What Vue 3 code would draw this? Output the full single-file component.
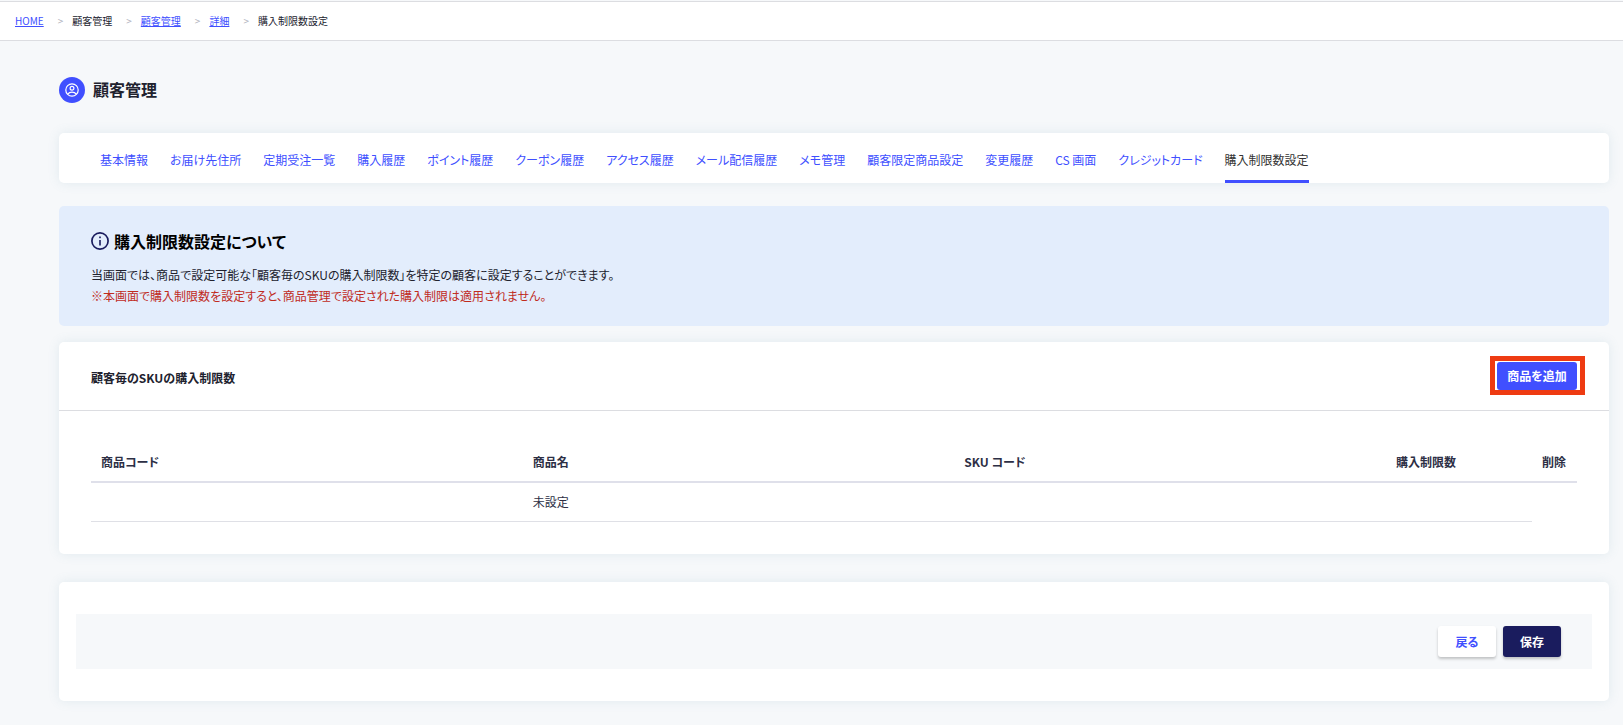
<script setup>
const crumbs = [
  { label: 'HOME', link: true },
  { label: '顧客管理', link: false },
  { label: '顧客管理', link: true },
  { label: '詳細', link: true },
  { label: '購入制限数設定', link: false }
]

const tabs = [
  '基本情報', 'お届け先住所', '定期受注一覧', '購入履歴', 'ポイント履歴', 'クーポン履歴',
  'アクセス履歴', 'メール配信履歴', 'メモ管理', '顧客限定商品設定', '変更履歴',
  'CS 画面', 'クレジットカード', '購入制限数設定'
]
const current = '購入制限数設定'
</script>

<template>
  <div class="page">
    <nav class="breadcrumb" aria-label="breadcrumb">
      <ol>
        <li v-for="(c, i) in crumbs" :key="i">
          <a v-if="c.link" href="#">{{ c.label }}</a>
          <span v-else>{{ c.label }}</span>
        </li>
      </ol>
    </nav>

    <main class="content">
      <header class="title">
        <span class="title-icon">
          <svg viewBox="0 0 14 14" width="14" height="14" aria-hidden="true">
            <g fill="none" stroke="#fff" stroke-width="1.2">
              <circle cx="7" cy="7" r="6.2" />
              <circle cx="7" cy="5.200" r="1.900" />
              <path d="M2.700 11.200c1-1.300 2.500-2 4.300-2s3.300.700 4.300 2" />
            </g>
          </svg>
        </span>
        <h1>顧客管理</h1>
      </header>

      <nav class="card tabs" aria-label="tabs">
        <a v-for="t in tabs" :key="t" href="#" :class="{ active: t === current }">{{ t }}</a>
      </nav>

      <section class="info">
        <h2>
          <svg viewBox="0 0 18 18" width="18" height="18" aria-hidden="true">
            <circle cx="9" cy="9" r="8.100" fill="none" stroke="#1a1c5e" stroke-width="1.700" />
            <rect x="8.200" y="4.500" width="1.600" height="1.700" fill="#1a1c5e" />
            <rect x="8.200" y="8" width="1.600" height="5.500" fill="#1a1c5e" />
          </svg>
          購入制限数設定について
        </h2>
        <p>当画面では、商品で設定可能な「顧客毎のSKUの購入制限数」を特定の顧客に設定することができます。</p>
        <p class="warn">※本画面で購入制限数を設定すると、商品管理で設定された購入制限は適用されません。</p>
      </section>

      <section class="card limits">
        <header class="limits-head">
          <h2>顧客毎のSKUの購入制限数</h2>
          <span class="highlight">
            <button type="button" class="add">商品を追加</button>
          </span>
        </header>
        <div class="limits-body">
          <table>
            <colgroup>
              <col />
              <col />
              <col />
              <col class="col-limit" />
              <col class="col-delete" />
            </colgroup>
            <thead>
              <tr>
                <th scope="col">商品コード</th>
                <th scope="col">商品名</th>
                <th scope="col">SKU コード</th>
                <th scope="col">購入制限数</th>
                <th scope="col">削除</th>
              </tr>
            </thead>
            <tbody>
              <tr>
                <td></td>
                <td>未設定</td>
                <td></td>
                <td></td>
              </tr>
            </tbody>
          </table>
        </div>
      </section>

      <section class="card footer">
        <div class="actions">
          <button type="button" class="back">戻る</button>
          <button type="button" class="save">保存</button>
        </div>
      </section>
    </main>
  </div>
</template>

<style>
body {
  background: #f6f8fa;
}
</style>

<style scoped>
.page {
  font-family: "Noto Sans CJK JP", "Noto Sans", sans-serif;
  font-feature-settings: "palt";
  font-size: 12px;
  line-height: 20px;
  color: #21222e;
}

h1,
h2,
p,
ol {
  margin: 0;
  padding: 0;
}

a {
  color: #404fff;
}

button {
  border: 0;
  border-radius: 3px;
  padding: 0;
  font: inherit;
  font-feature-settings: inherit;
  font-weight: 700;
  cursor: pointer;
}

.breadcrumb {
  margin-top: 1px;
  border-top: 1px solid #dcdde1;
  border-bottom: 1px solid #dcdde1;
  background: #fff;
  padding: 9px 15px;
}

.breadcrumb ol {
  display: flex;
  gap: 14px;
  list-style: none;
  font-size: 10px;
}

.breadcrumb li + li::before {
  content: ">";
  margin-right: 9px;
  color: #b0b2bd;
}

.content {
  padding: 36px 14px 22px 59px;
}

.title {
  display: flex;
  align-items: center;
  gap: 8px;
}

.title-icon {
  display: flex;
  align-items: center;
  justify-content: center;
  width: 26px;
  height: 26px;
  border-radius: 50%;
  background: #404fff;
}

.title h1 {
  padding-bottom: 2px;
  font-size: 16px;
  line-height: 24px;
}

.card {
  border-radius: 5px;
  background: #fff;
  box-shadow: 0 0 12px rgba(100, 150, 170, 0.14);
}

.tabs {
  display: flex;
  gap: 22px;
  margin-top: 30px;
  padding: 0 41px;
}

.tabs a {
  padding: 17px 0 10px;
  border-bottom: 3px solid transparent;
  text-decoration: none;
  white-space: nowrap;
}

.tabs a.active {
  border-bottom-color: #404fff;
  color: #333;
}

.info {
  margin-top: 23px;
  padding: 23px 32px 20px;
  border-radius: 5px;
  background: #e3edfc;
}

.info h2 {
  display: flex;
  align-items: center;
  gap: 5px;
  margin-bottom: 11px;
  font-size: 16px;
  line-height: 24px;
  color: #000;
}

.info p {
  line-height: 21px;
}

.info .warn {
  color: #c02b1d;
}

.limits {
  margin-top: 16px;
}

.limits-head {
  display: flex;
  align-items: flex-start;
  justify-content: space-between;
  padding: 20px 32px;
  border-bottom: 1px solid #dcdde1;
}

.limits-head h2 {
  padding: 6px 0 2px;
  font-size: 12px;
}

.highlight {
  position: relative;
  display: flex;
}

.highlight::after {
  content: "";
  position: absolute;
  inset: -6px -8px -5px -7px;
  border: 5px solid #ee3b12;
  pointer-events: none;
}

.add {
  width: 80px;
  height: 28px;
  background: #404fff;
  color: #fff;
}

.limits-body {
  padding: 32px;
}

table {
  width: 100%;
  border-collapse: separate;
  border-spacing: 0;
  table-layout: fixed;
  color: #2d2f45;
}

.col-limit {
  width: 146px;
}

.col-delete {
  width: 45px;
}

th {
  padding: 9px 0 9px 10px;
  border-bottom: 2px solid #dfe0ea;
  text-align: left;
  font-weight: 700;
}

td {
  height: 20px;
  padding: 9px 10px;
  border-bottom: 1px solid #dfe0e6;
}

.footer {
  margin-top: 28px;
  padding: 32px 17px;
}

.actions {
  display: flex;
  justify-content: flex-end;
  gap: 7px;
  padding: 12px 31px;
  background: #f6f8fa;
}

.actions button {
  width: 58px;
  height: 31px;
  box-shadow: 0 2px 3px rgba(0, 0, 0, 0.22);
}

.back {
  background: #fff;
  color: #404fff;
}

.save {
  background: #1a1c5e;
  color: #fff;
}
</style>
